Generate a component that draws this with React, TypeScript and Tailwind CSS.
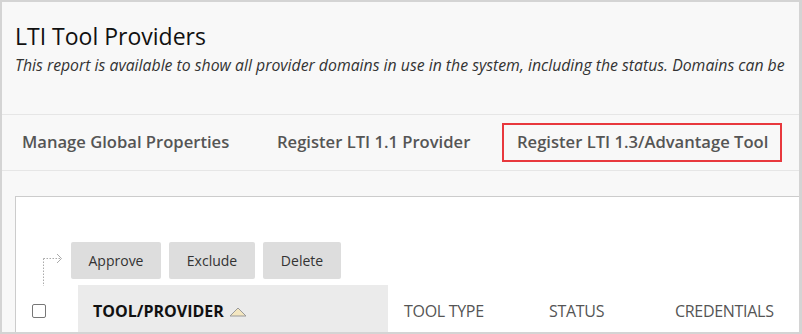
import React from "react";

export default function App() {
  return (
    <div
      className="w-[802px] h-[334px] overflow-hidden bg-[#f8f8f8] border-t-2 border-l-2 border-r-[3px] border-b-2 border-[#d4d4d4] flex flex-col"
      style={{ fontFamily: '"Open Sans", "Noto Sans", sans-serif' }}
    >
      <div className="pl-[13px] pt-[19px] h-[112px] shrink-0">
        <h1 className="text-[23px] leading-[30px] text-[#111]">LTI Tool Providers</h1>
        <p className="mt-[4px] text-[15.8px] leading-[20px] italic text-[#333] whitespace-nowrap">
          This report is available to show all provider domains in use in the system, including the status. Domains can be
        </p>
      </div>
      <div className="h-[57px] shrink-0 border-t border-b border-[#e6e6e6] flex items-center text-[16.6px] font-semibold text-[#555]">
        <div className="pl-[20px] w-[275px]">Manage Global Properties</div>
        <div className="w-[225px]">Register LTI 1.1 Provider</div>
        <div className="h-[39px] w-[280px] border-2 border-[#e8383d] flex items-center pl-[13px]">
          Register LTI 1.3/Advantage Tool
        </div>
      </div>
      <div className="flex-1 pt-[25px] pl-[13px]">
        <div className="h-full bg-white border-t border-l border-[#cccccc] pt-[45px]">
          <div className="flex items-start">
            <div className="w-[55px] h-[37px] relative shrink-0">
              <svg width="55" height="50" className="absolute left-0 top-0" viewBox="0 0 55 50">
                <path d="M27.5 16.5 L27.5 44" stroke="#aaa" strokeWidth="1" strokeDasharray="1.5 1.5" fill="none" />
                <path d="M27.5 16.5 L44 16.5" stroke="#aaa" strokeWidth="1" strokeDasharray="1.5 1.5" fill="none" />
                <path d="M41 12 L45.5 16.5 L41 21" stroke="#aaa" strokeWidth="1" fill="none" />
              </svg>
            </div>
            <div className="flex gap-[8px] text-[14px] text-[#333]">
              <div className="h-[37px] w-[90px] bg-[#dddddd] rounded-[2px] flex items-center justify-center">Approve</div>
              <div className="h-[37px] w-[86px] bg-[#dddddd] rounded-[2px] flex items-center justify-center">Exclude</div>
              <div className="h-[37px] w-[78px] bg-[#dddddd] rounded-[2px] flex items-center justify-center">Delete</div>
            </div>
          </div>
          <div className="flex mt-[6px] h-[52px]">
            <div className="w-[62px] flex items-center pl-[16px] shrink-0">
              <div className="w-[14px] h-[14px] border border-[#777] rounded-[2px] bg-white" />
            </div>
            <div className="w-[310px] bg-[#ebebeb] flex items-center pl-[15px] text-[16px] font-bold text-[#111]">
              TOOL/PROVIDER
              <svg width="18" height="10" viewBox="0 0 18 10" className="ml-[5px] mt-[2px]">
                <path d="M1 9 L9 1 L17 9 Z" fill="#f3e6c0" stroke="#9a9a9a" strokeWidth="1" />
              </svg>
            </div>
            <div className="flex items-center text-[16px] text-[#555] tracking-[-0.3px]">
              <div className="pl-[16px] w-[161px]">TOOL TYPE</div>
              <div className="w-[126px]">STATUS</div>
              <div>CREDENTIALS</div>
            </div>
          </div>
        </div>
      </div>
    </div>
  );
}
